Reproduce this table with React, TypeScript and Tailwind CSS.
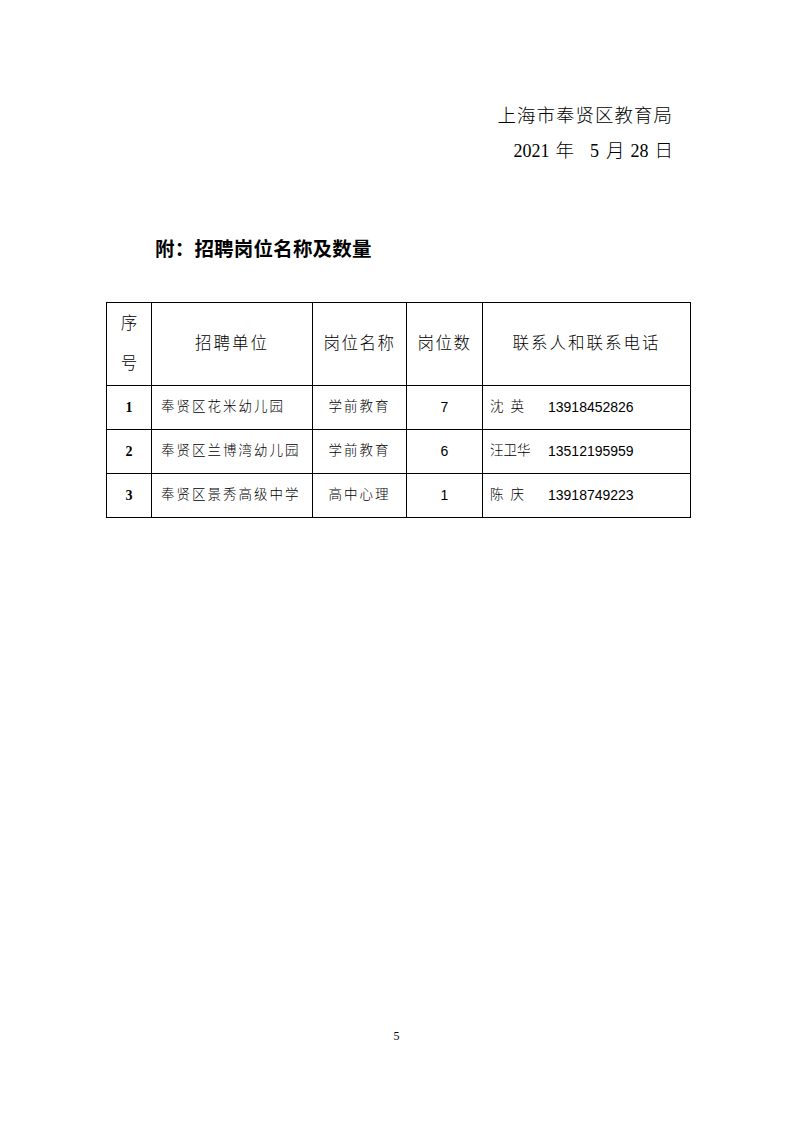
const cjk = "font-['Liberation_Serif','Noto_Sans_CJK_SC',serif]";

const rows = [
  { no: "1", unit: "奉贤区花米幼儿园", post: "学前教育", count: "7", name: ["沈", "英"], phone: "13918452826" },
  { no: "2", unit: "奉贤区兰博湾幼儿园", post: "学前教育", count: "6", name: ["汪卫华"], phone: "13512195959" },
  { no: "3", unit: "奉贤区景秀高级中学", post: "高中心理", count: "1", name: ["陈", "庆"], phone: "13918749223" },
];

export default function App() {
  return (
    <div className={`relative w-[793px] h-[1122px] bg-white text-black ${cjk}`}>
      {/* Signature block */}
      <div className="pt-[99px] pr-[120px] flex flex-col items-end font-light">
        <p className="text-[18.5px] leading-[35px] tracking-[1px]">上海市奉贤区教育局</p>
        <p className="text-[18.5px] leading-[35px] flex items-baseline">
          <span className="text-[18px]">2021</span>
          <span className="ml-[6px]">年</span>
          <span className="ml-[16px] text-[18px]">5</span>
          <span className="ml-[7px]">月</span>
          <span className="ml-[6px] text-[18px]">28</span>
          <span className="ml-[6px]">日</span>
        </p>
      </div>

      {/* Heading */}
      <h2 className="mt-[66px] ml-[155px] text-[19.5px] leading-[30px] font-bold tracking-[0.2px]">
        附：招聘岗位名称及数量
      </h2>

      {/* Table */}
      <table className="mt-[37px] ml-[106px] w-[584px] border-collapse table-fixed font-light">
        <colgroup>
          <col className="w-[45px]" />
          <col className="w-[161px]" />
          <col className="w-[94px]" />
          <col className="w-[76px]" />
          <col className="w-[208px]" />
        </colgroup>
        <thead>
          <tr className="h-[83px] text-[16.5px]">
            <th className="border border-black font-light">
              <div className="flex flex-col items-center gap-[16px] leading-[24px]">
                <span>序</span>
                <span>号</span>
              </div>
            </th>
            <th className="border border-black font-light tracking-[2px]">招聘单位</th>
            <th className="border border-black font-light tracking-[1.5px]">岗位名称</th>
            <th className="border border-black font-light tracking-[1.5px]">岗位数</th>
            <th className="border border-black font-light tracking-[2px]">联系人和联系电话</th>
          </tr>
        </thead>
        <tbody>
          {rows.map((r) => (
            <tr key={r.no} className="h-[44px] text-[13.5px]">
              <td className="border border-black text-center font-bold font-['Liberation_Serif',serif] text-[14px]">
                {r.no}
              </td>
              <td className="border border-black pl-[9px] tracking-[2px]">{r.unit}</td>
              <td className="border border-black text-center tracking-[2px]">{r.post}</td>
              <td className="border border-black text-center font-['Liberation_Sans',sans-serif] font-normal text-[14px]">
                {r.count}
              </td>
              <td className="border border-black pl-[7px]">
                <div className="flex items-center">
                  <span className="w-[58px]">
                    {r.name.length === 2 ? (
                      <span className="flex justify-between w-[34px]">
                        <span>{r.name[0]}</span>
                        <span>{r.name[1]}</span>
                      </span>
                    ) : (
                      <span>{r.name[0]}</span>
                    )}
                  </span>
                  <span className="font-['Liberation_Sans',sans-serif] font-normal text-[14px]">{r.phone}</span>
                </div>
              </td>
            </tr>
          ))}
        </tbody>
      </table>

      {/* Page number */}
      <p className="absolute left-0 right-0 top-[1027px] text-center text-[12px] font-['Liberation_Serif',serif]">
        5
      </p>
    </div>
  );
}
